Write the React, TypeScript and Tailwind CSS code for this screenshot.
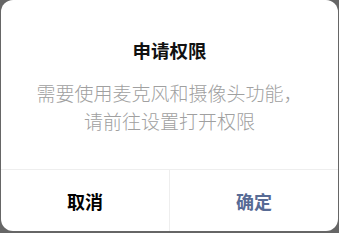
export default function App() {
  return (
    <div
      className="w-[339px] h-[233px] bg-[#666666] pl-px"
      style={{ fontFamily: '"Noto Sans CJK SC", "Noto Sans", sans-serif' }}
    >
      <div className="w-[337px] h-[231px] rounded-[12px] bg-white flex flex-col overflow-hidden">
        <div className="h-[169px] flex flex-col items-center pt-[37px]">
          <h2 className="text-[18.5px] leading-[26px] font-bold text-[#111111]">申请权限</h2>
          <p className="mt-[16px] text-[19px] leading-[28px] font-light text-[#a0a0a0] text-center">
            需要使用麦克风和摄像头功能，
            <br />
            请前往设置打开权限
          </p>
        </div>
        <div className="flex flex-1 border-t border-[#eeeeee]">
          <button className="flex-1 flex items-center justify-center text-[18px] font-bold text-black pt-[2px]">
            取消
          </button>
          <div className="w-px bg-[#eeeeee]" />
          <button className="flex-1 flex items-center justify-center text-[18px] font-bold text-[#576b95] pt-[2px]">
            确定
          </button>
        </div>
      </div>
    </div>
  );
}
